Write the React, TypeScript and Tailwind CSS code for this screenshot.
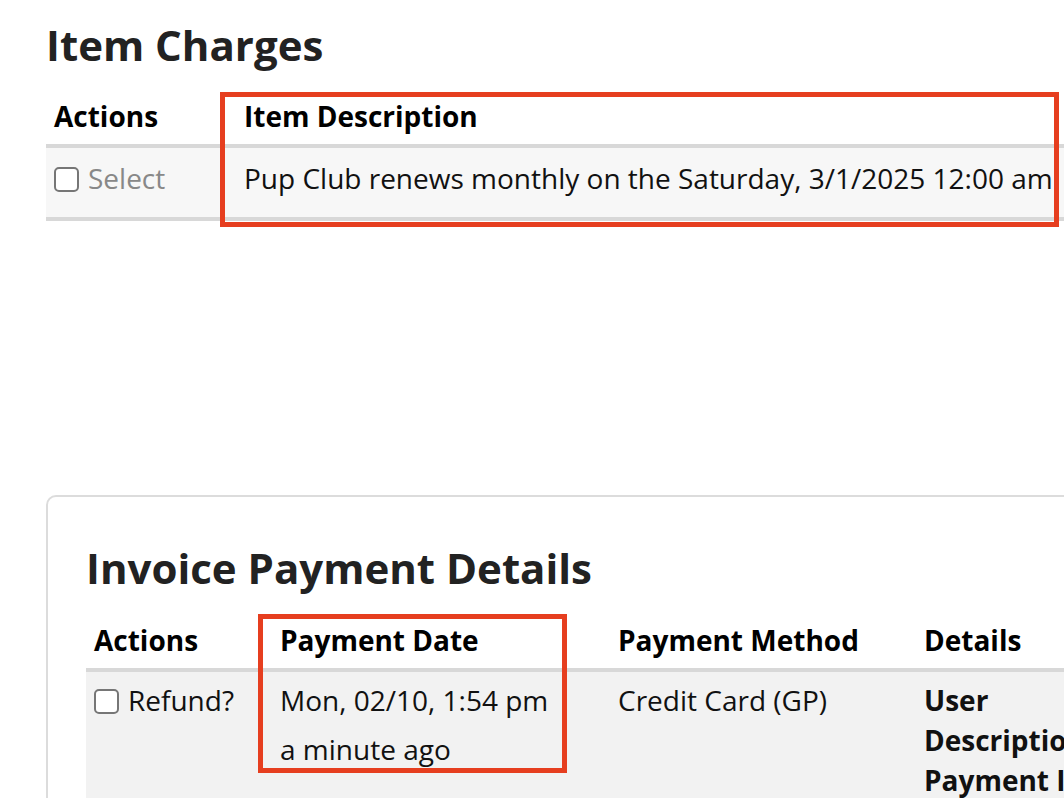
import React from "react";

function Checkbox() {
  return (
    <span className="inline-block w-[25px] h-[25px] rounded-[5px] border-2 border-[#767676] bg-white align-middle mr-[9px] relative top-[-2px]" />
  );
}

export default function App() {
  return (
    <div className="relative w-[1064px] h-[798px] overflow-hidden bg-white font-['Open_Sans',sans-serif] text-[#111]">
      <section className="pl-[46px] pt-[20px]">
        <h2 className="text-[42px] leading-[50px] font-bold text-[#222]">Item Charges</h2>
        <table className="mt-[18px] w-[1200px] border-collapse text-[28px] leading-[36px]">
          <thead>
            <tr>
              <th className="w-[190px] text-left font-bold text-black px-[8px] pt-[10px] pb-[10px] border-b-4 border-[#d8d8d8]">Actions</th>
              <th className="text-left font-bold text-black px-[8px] pt-[10px] pb-[10px] border-b-4 border-[#d8d8d8]">Item Description</th>
            </tr>
          </thead>
          <tbody>
            <tr className="bg-[#f7f7f7]">
              <td className="h-[69px] align-top px-[8px] pt-[12px] pb-[21px] border-b-4 border-[#d8d8d8] whitespace-nowrap">
                <Checkbox />
                <span className="text-[#888]">Select</span>
              </td>
              <td className="align-top px-[8px] pt-[12px] pb-[21px] border-b-4 border-[#d8d8d8] whitespace-nowrap">
                Pup Club renews monthly on the Saturday, 3/1/2025 12:00 am
              </td>
            </tr>
          </tbody>
        </table>
      </section>

      <section className="mt-[274px] ml-[46px] w-[1150px] h-[400px] border-2 border-[#dcdcdc] rounded-[10px] pl-[38px] pt-[46px]">
        <h2 className="text-[42px] leading-[50px] font-bold text-[#222]">Invoice Payment Details</h2>
        <table className="mt-[19px] w-[1100px] border-collapse text-[28px] leading-[36px]">
          <thead>
            <tr>
              <th className="w-[186px] text-left font-bold text-black px-[8px] pt-[10px] pb-[10px] border-b-4 border-[#d8d8d8]">Actions</th>
              <th className="w-[338px] text-left font-bold text-black px-[8px] pt-[10px] pb-[10px] border-b-4 border-[#d8d8d8]">Payment Date</th>
              <th className="w-[306px] text-left font-bold text-black px-[8px] pt-[10px] pb-[10px] border-b-4 border-[#d8d8d8]">Payment Method</th>
              <th className="text-left font-bold text-black px-[8px] pt-[10px] pb-[10px] border-b-4 border-[#d8d8d8]">Details</th>
            </tr>
          </thead>
          <tbody>
            <tr className="bg-[#f2f2f2]">
              <td className="align-top px-[8px] pt-[10px] pb-[40px] whitespace-nowrap">
                <Checkbox />
                <span>Refund?</span>
              </td>
              <td className="align-top px-[8px] pt-[10px] pb-[40px] whitespace-nowrap">
                <div>Mon, 02/10, 1:54 pm</div>
                <div className="mt-[13px]">a minute ago</div>
              </td>
              <td className="align-top px-[8px] pt-[10px] pb-[40px] whitespace-nowrap">Credit Card (GP)</td>
              <td className="align-top px-[8px] pt-[8px] pb-[40px] font-bold leading-[40px] whitespace-nowrap">
                <div>User</div>
                <div>Description</div>
                <div>Payment ID</div>
              </td>
            </tr>
          </tbody>
        </table>
      </section>

      <div className="absolute left-[220px] top-[92px] w-[839px] h-[135px] border-[5px] border-[#e63e1f]" />
      <div className="absolute left-[258px] top-[614px] w-[309px] h-[159px] border-[5px] border-[#e63e1f]" />
    </div>
  );
}
